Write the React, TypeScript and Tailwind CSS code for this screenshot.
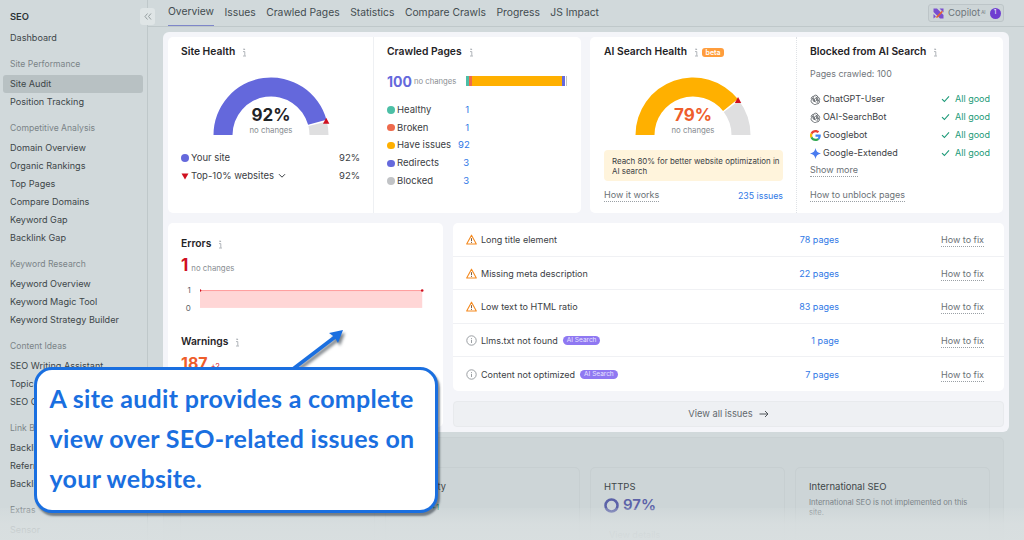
import { ReactNode } from "react";

const font = "[font-family:Inter,'Liberation_Sans',sans-serif]";

// Half-ring segment between two fractions of the gauge (0 = left, 1 = right)
function arcPath(cx: number, cy: number, R: number, r: number, from: number, to: number) {
  const pt = (rad: number, f: number) => {
    const a = Math.PI * (1 - f);
    return `${(cx + rad * Math.cos(a)).toFixed(2)} ${(cy - rad * Math.sin(a)).toFixed(2)}`;
  };
  return `M${pt(R, from)} A${R} ${R} 0 0 1 ${pt(R, to)} L${pt(r, to)} A${r} ${r} 0 0 0 ${pt(r, from)} Z`;
}

function Info() {
  return (
    <svg width="5" height="9" viewBox="0 0 5 9" className="ml-[7px] shrink-0">
      <path d="M1 1.2h2M2.6 1v1M1 3.6h1.8v4.2M1 8h3" stroke="#a9aeb3" strokeWidth="0.9" fill="none" />
    </svg>
  );
}

function Gauge({ value, color, textColor }: { value: number; color: string; textColor: string }) {
  const f = value / 100;
  const a = Math.PI * (1 - f);
  const tx = 58 + 57 * Math.cos(a);
  const ty = 58 - 57 * Math.sin(a);
  return (
    <svg width="120" height="60" viewBox="-1 0 120 60" className="block">
      <path d={arcPath(58, 58, 57.5, 38.5, 0, f - 0.005)} fill={color} />
      <path d={arcPath(58, 58, 57.5, 38.5, f + 0.005, 1)} fill="#dfdfe0" />
      <path d={`M${tx - 3.2} ${ty + 3} L${tx} ${ty - 3} L${tx + 3.2} ${ty + 3} Z`} fill="#d0101f" />
      <text x="58" y="44" textAnchor="middle" fontSize="17" fontWeight="700" fill={textColor} fontFamily="Inter">
        {value}%
      </text>
      <text x="58" y="55.5" textAnchor="middle" fontSize="7.8" fill="#878b90" fontFamily="Inter">
        no changes
      </text>
    </svg>
  );
}

function CardTitle({ children }: { children: ReactNode }) {
  return <div className="flex h-[14px] items-center text-[10.3px] font-semibold text-[#1f2326]">{children}</div>;
}

function DottedLink({ children, className = "" }: { children: ReactNode; className?: string }) {
  return (
    <span className={`border-b border-dotted border-[#9aa0a5] text-[9px] leading-[12px] text-[#6b7176] ${className}`}>
      {children}
    </span>
  );
}

function OpenAiIcon() {
  return (
    <svg width="11" height="11" viewBox="0 0 24 24" className="shrink-0" fill="none" stroke="#5c6165" strokeWidth="1.9">
      <path d="M12 2.5a5 5 0 0 1 5 4.2 5 5 0 0 1 3.2 7.8 5 5 0 0 1-5.4 7 5 5 0 0 1-8.4-1.2 5 5 0 0 1-3-8 5 5 0 0 1 4.6-7.4A5 5 0 0 1 12 2.5Z" />
      <path d="M9 4.5 6.6 8.4v6l5.4 3.2M15 19.500l2.400-4v-6L12 6.300M4 8.500 9 11.500v5M20 15.500l-5-3v-5M9 11.500l3-1.800 3 1.800v2l-3 2-3-2Z" />
    </svg>
  );
}

function GoogleIcon() {
  return (
    <svg width="11" height="11" viewBox="0 0 48 48" className="shrink-0">
      <path fill="#EA4335" d="M24 9.500c3.500 0 6.700 1.200 9.200 3.600l6.900-6.900C35.900 2.400 30.500 0 24 0 14.600 0 6.500 5.400 2.600 13.200l8 6.200C12.400 13.700 17.700 9.500 24 9.500z" />
      <path fill="#4285F4" d="M47 24.500c0-1.600-.1-3.100-.4-4.500H24v9h12.900c-.6 3-2.200 5.500-4.700 7.200l7.700 6c4.500-4.200 7.100-10.300 7.100-17.700z" />
      <path fill="#FBBC05" d="M10.500 28.600a14.500 14.500 0 0 1 0-9.200l-8-6.200a24 24 0 0 0 0 21.600l8-6.200z" />
      <path fill="#34A853" d="M24 48c6.500 0 11.900-2.100 15.900-5.800l-7.700-6c-2.200 1.500-4.900 2.300-8.200 2.300-6.300 0-11.600-4.200-13.500-9.900l-8 6.200C6.500 42.600 14.600 48 24 48z" />
    </svg>
  );
}

function GeminiIcon() {
  return (
    <svg width="11" height="11" viewBox="0 0 24 24" className="shrink-0">
      <path d="M12 0c.8 6.500 4.900 11 12 12-7.100 1-11.200 5.500-12 12-.8-6.500-4.900-11-12-12C7.100 11 11.200 6.500 12 0Z" fill="#4a7cf0" />
    </svg>
  );
}

function Check() {
  return (
    <svg width="9" height="8" viewBox="0 0 9 8" fill="none" stroke="#1c9a78" strokeWidth="1.1" className="block">
      <path d="M1 4.200 3.400 6.500 8 1.300" />
    </svg>
  );
}

function WarnIcon() {
  return (
    <svg width="11" height="11" viewBox="0 0 11 11" fill="none" className="shrink-0">
      <path d="M5.500 1.200 10.300 10H.7Z" stroke="#f58a1f" strokeWidth="1.100" strokeLinejoin="round" />
      <path d="M5.500 4.200v3M5.500 8v.9" stroke="#6b4a2a" strokeWidth="0.9" />
    </svg>
  );
}

function InfoCircle() {
  return (
    <svg width="11" height="11" viewBox="0 0 11 11" fill="none" className="shrink-0">
      <circle cx="5.500" cy="5.500" r="4.700" stroke="#8f9499" strokeWidth="0.9" />
      <path d="M5.500 3v.9M5.500 4.800v3.200" stroke="#8f9499" strokeWidth="0.9" />
    </svg>
  );
}

const nav: { heading?: string; items: string[] }[] = [
  { items: ["Dashboard"] },
  { heading: "Site Performance", items: ["Site Audit", "Position Tracking"] },
  { heading: "Competitive Analysis", items: ["Domain Overview", "Organic Rankings", "Top Pages", "Compare Domains", "Keyword Gap", "Backlink Gap"] },
  { heading: "Keyword Research", items: ["Keyword Overview", "Keyword Magic Tool", "Keyword Strategy Builder"] },
  { heading: "Content Ideas", items: ["SEO Writing Assistant", "Topic Research", "SEO Content Template"] },
  { heading: "Link Building", items: ["Backlink Analytics", "Referring Domains", "Backlink Audit"] },
  { heading: "Extras", items: ["Sensor"] },
];

function Sidebar() {
  return (
    <aside className="relative h-[540px] w-[148px] shrink-0 overflow-hidden border-r border-[#bfc8ca] pt-[8px]">
      <div className="flex h-[18px] items-center pl-[10px] text-[9.400px] font-semibold text-[#2c3336]">SEO</div>
      {nav.map((section, i) => (
        <div key={i} className={section.heading ? "mt-[8px]" : "mt-[3px]"}>
          {section.heading && (
            <div className="mb-[2px] flex h-[18px] items-center pl-[10px] text-[8.600px] text-[#7b8488]">{section.heading}</div>
          )}
          {section.items.map((item) => (
            <div
              key={item}
              className={`ml-[3px] mr-[4px] flex h-[18px] items-center rounded-[3px] pl-[7px] text-[9.100px] text-[#3d4649] ${item === "Site Audit" ? "bg-[#b8c1c3]" : ""}`}
            >
              {item}
            </div>
          ))}
        </div>
      ))}
    </aside>
  );
}

const tabs = ["Overview", "Issues", "Crawled Pages", "Statistics", "Compare Crawls", "Progress", "JS Impact"];

function TopBar() {
  return (
    <div className="flex h-[27px] items-stretch border-b border-[#bfc8ca] pl-[20px] pr-[20px]">
      <div className="flex gap-[10.500px]">
        {tabs.map((t, i) => (
          <div
            key={t}
            className={`flex h-[26px] items-center pb-[1px] text-[10.300px] text-[#434c50] ${i === 0 ? "border-b border-[#7e86c9]" : ""}`}
          >
            {t}
          </div>
        ))}
      </div>
      <div className="ml-auto mt-[4px] flex h-[18px] w-[76px] items-center gap-[4px] rounded-[3px] border border-[#bdc5c8] bg-[#cdd5d7] pl-[4px] text-[9.600px] text-[#6e767b]">
        <svg width="11" height="11" viewBox="0 0 11 11" className="shrink-0">
          <path d="M0.500 0.500H4L10.500 7V10.500H7L0.500 4Z" fill="#7a4fd0" />
          <path d="M0.500 6 3 8.500 0.500 10.500ZM6.500 0.500H10.500V4.500Z" fill="#7a4fd0" />
          <path d="M2.500 9.500 9 2.500 9.800 4 4.500 9.800Z" fill="#e8642f" />
        </svg>
        <span className="leading-[12px]">
          Copilot<sup className="ml-px text-[4.500px]">AI</sup>
        </span>
        <span className="flex size-[11px] items-center justify-center rounded-full bg-[#6f3fd0] text-[6.500px] text-white">1</span>
      </div>
    </div>
  );
}

const pagesRows = [
  { label: "Healthy", value: "1", color: "bg-[#4cbfa6]" },
  { label: "Broken", value: "1", color: "bg-[#ee6a4d]" },
  { label: "Have issues", value: "92", color: "bg-[#ffb000]" },
  { label: "Redirects", value: "3", color: "bg-[#6569dc]" },
  { label: "Blocked", value: "3", color: "bg-[#c1c3c6]" },
];

function HealthCard() {
  return (
    <div className="flex h-[176px] rounded-[5px] bg-white">
      <div className="w-[206px] shrink-0 border-r border-[#eef0f3] px-[13px] pt-[8px]">
        <CardTitle>
          Site Health
          <Info />
        </CardTitle>
        <div className="mt-[18px] flex justify-center pl-[2px]">
          <Gauge value={92} color="#6468dc" textColor="#1f2326" />
        </div>
        <div className="mt-[12px] flex h-[18px] items-center text-[9.500px] text-[#3b4044]">
          <span className="mr-[2.500px] size-[7.500px] rounded-full bg-[#6569dc]" />
          Your site
          <span className="ml-auto">92%</span>
        </div>
        <div className="flex h-[18px] items-center text-[9.500px] text-[#3b4044]">
          <svg width="8" height="7" viewBox="0 0 8 7" className="mr-[2px]">
            <path d="M0.500 0.500h7L4 6.500Z" fill="#d0101f" />
          </svg>
          Top-10% websites
          <svg width="8" height="6" viewBox="0 0 8 6" fill="none" stroke="#3b4044" strokeWidth="1" className="ml-[4px]">
            <path d="M1 1.200 4 4.200 7 1.200" />
          </svg>
          <span className="ml-auto">92%</span>
        </div>
      </div>
      <div className="flex-1 pl-[13px] pr-[14px] pt-[8px]">
        <CardTitle>
          Crawled Pages
          <Info />
        </CardTitle>
        <div className="mt-[10px] flex h-[24px] items-center">
          <span className="text-[14px] font-bold text-[#6569dc]">100</span>
          <span className="ml-[2px] pt-[2px] text-[7.700px] text-[#8a8e93]">no changes</span>
          <div className="ml-auto flex h-[10px] w-[101px]">
            <span className="w-[2.500px] bg-[#4cbfa6]" />
            <span className="w-[3.500px] bg-[#ee6a4d]" />
            <span className="flex-1 bg-[#ffb000]" />
            <span className="w-[2.500px] bg-[#6569dc]" />
            <span className="w-[1px] bg-white" />
            <span className="w-[1.500px] bg-[#c1c3c6]" />
          </div>
        </div>
        <div className="mt-[8px]">
          {pagesRows.map((r) => (
            <div key={r.label} className="flex h-[17.800px] items-center text-[9.500px] text-[#3b4044]">
              <span className={`mr-[2.500px] size-[7.500px] rounded-full ${r.color}`} />
              <span className="w-[61px]">{r.label}</span>
              <span className="w-[11px] text-right text-[#2f78e6]">{r.value}</span>
            </div>
          ))}
        </div>
      </div>
    </div>
  );
}

const bots = [
  { name: "ChatGPT-User", icon: <OpenAiIcon /> },
  { name: "OAI-SearchBot", icon: <OpenAiIcon /> },
  { name: "Googlebot", icon: <GoogleIcon /> },
  { name: "Google-Extended", icon: <GeminiIcon /> },
];

function AiCard() {
  return (
    <div className="flex h-[176px] rounded-[5px] bg-white">
      <div className="flex w-[207px] shrink-0 flex-col border-r border-dotted border-[#dfe2e6] pl-[14px] pr-[13px] pt-[8px]">
        <CardTitle>
          AI Search Health
          <Info />
          <span className="ml-[3px] rounded-[3px] bg-[#ff9d3c] px-[3.500px] text-[7px] leading-[9px] text-white">beta</span>
        </CardTitle>
        <div className="mt-[18px] flex justify-center">
          <Gauge value={79} color="#ffb000" textColor="#ee5d2b" />
        </div>
        <div className="mt-[13px] rounded-[4px] bg-[#fff4dc] px-[8px] py-[5.500px] text-[7.900px] leading-[10px] whitespace-nowrap text-[#3b4044]">
          Reach 80% for better website optimization in
          <br />
          AI search
        </div>
        <div className="mt-[8px] flex items-center justify-between">
          <DottedLink>How it works</DottedLink>
          <span className="text-[8.800px] text-[#2f78e6]">235 issues</span>
        </div>
      </div>
      <div className="flex-1 pl-[13px] pr-[13px] pt-[8px]">
        <CardTitle>
          Blocked from AI Search
          <Info />
        </CardTitle>
        <div className="mt-[8px] text-[8.900px] leading-[14px] text-[#71767b]">Pages crawled: 100</div>
        <div className="mt-[9px]">
          {bots.map((b) => (
            <div key={b.name} className="flex h-[18px] items-center text-[9px] text-[#3b4044]">
              {b.icon}
              <span className="ml-[2px]">{b.name}</span>
              <span className="ml-auto mr-[5px]">
                <Check />
              </span>
              <span className="text-[#1c9a78]">All good</span>
            </div>
          ))}
        </div>
        <div className="mt-[2px] flex">
          <DottedLink>Show more</DottedLink>
        </div>
        <div className="mt-[12px] flex">
          <DottedLink>How to unblock pages</DottedLink>
        </div>
      </div>
    </div>
  );
}

function ErrorsCard() {
  return (
    <div className="h-[204px] w-[275px] shrink-0 rounded-[5px] bg-white px-[13px] pt-[14px]">
      <CardTitle>
        Errors
        <Info />
      </CardTitle>
      <div className="mt-[2px] flex h-[17px] items-baseline">
        <span className="text-[17px] font-bold text-[#d0101f]">1</span>
        <span className="ml-[3px] text-[7.800px] text-[#8a8e93]">no changes</span>
      </div>
      <div className="mt-[13.500px] flex">
        <div className="flex w-[19px] flex-col gap-[7.500px] pt-[1.500px] text-right text-[8px] leading-[10px] text-[#5d6267]">
          <span className="pr-[9px]">1</span>
          <span className="pr-[9px]">0</span>
        </div>
        <svg width="232" height="24" viewBox="0 0 232 24" className="block">
          <rect x="0" y="6" width="224" height="18" fill="#ffd6d6" />
          <path d="M0 6.500H224" stroke="#ff8f8f" strokeWidth="0.800" />
          <circle cx="0" cy="6.500" r="1.300" fill="#d0101f" />
          <circle cx="224" cy="6.500" r="1.300" fill="#d0101f" />
        </svg>
      </div>
      <div className="mt-[22.500px]">
        <CardTitle>
          Warnings
          <Info />
        </CardTitle>
      </div>
      <div className="mt-[2px] flex items-baseline">
        <span className="text-[16px] font-bold text-[#ee5d2b]">187</span>
        <span className="ml-[3px] text-[7.500px] text-[#d0101f]">+2</span>
      </div>
    </div>
  );
}

const issues = [
  { text: "Long title element", pages: "78 pages", warn: true },
  { text: "Missing meta description", pages: "22 pages", warn: true },
  { text: "Low text to HTML ratio", pages: "83 pages", warn: true },
  { text: "Llms.txt not found", pages: "1 page", ai: true },
  { text: "Content not optimized", pages: "7 pages", ai: true },
];

function IssuesList() {
  return (
    <div className="flex flex-1 flex-col gap-[10px]">
      <div className="h-[168px] divide-y divide-[#f0f1f4] rounded-[5px] bg-white">
        {issues.map((row) => (
          <div key={row.text} className="flex h-[33.600px] items-center pl-[13px] pr-[20px] pt-[1px] text-[9px] text-[#3b4044]">
            {row.warn ? <WarnIcon /> : <InfoCircle />}
            <span className="ml-[4px]">{row.text}</span>
            {row.ai && (
              <span className="ml-[5px] rounded-full bg-[#8f78f2] px-[4px] text-[6.500px] leading-[9px] text-[#e8e4ff]">AI Search</span>
            )}
            <span className="ml-auto mr-[102px] text-[#2f78e6]">{row.pages}</span>
            <DottedLink className="mt-[2px]">How to fix</DottedLink>
          </div>
        ))}
      </div>
      <div className="flex h-[26px] items-center justify-center gap-[6px] rounded-[4px] border border-[#e8eaed] bg-[#eef0f3] text-[9.300px] text-[#62686d]">
        View all issues
        <svg width="10" height="8" viewBox="0 0 10 8" fill="none" stroke="#4f5559" strokeWidth="1">
          <path d="M0.500 4H9M6 1l3 3-3 3" />
        </svg>
      </div>
    </div>
  );
}

function LowerCard({ children, className = "" }: { children?: ReactNode; className?: string }) {
  return <div className={`flex h-[80px] w-[195px] flex-col rounded-[5px] border border-[#c7cfd1] pt-[13px] ${className}`}>{children}</div>;
}

function LowerPanel() {
  return (
    <div className="mr-[20px] mt-[5px] h-[110px] rounded-[5px] border border-[#c9d1d3] bg-[#cdd5d7] pl-[16px] pt-[29px]">
      <div className="flex gap-[10px]">
        <LowerCard className="px-[13px]" />
        <LowerCard className="pl-[9px]">
          <div className="text-[9.200px] leading-[12px] text-[#3d4649]">Crawlability</div>
          <div className="mt-[1px] flex items-baseline">
            <span className="text-[15px] font-semibold text-[#5b62a8]">97%</span>
            <span className="ml-[3px] text-[7.500px] text-[#1c9a78]">+1</span>
          </div>
        </LowerCard>
        <LowerCard className="px-[13px]">
          <div className="text-[9.500px] leading-[12px] text-[#3d4649]">HTTPS</div>
          <div className="mt-[1px] flex items-center gap-[4px]">
            <svg width="15" height="15" viewBox="0 0 15 15" fill="none">
              <circle cx="7.500" cy="7.500" r="6" stroke="#5b62a8" strokeWidth="2.500" />
            </svg>
            <span className="text-[15px] font-semibold text-[#5b62a8]">97%</span>
          </div>
          <div className="ml-[5px] mt-[12px] text-[9px] leading-[12px] text-[#8d979a]">View details</div>
        </LowerCard>
        <LowerCard className="px-[13px]">
          <div className="text-[9.500px] leading-[12px] text-[#3d4649]">International SEO</div>
          <div className="mt-[5px] text-[7.600px] leading-[10px] text-[#7b8488]">
            International SEO is not implemented on this site.
          </div>
        </LowerCard>
      </div>
    </div>
  );
}

function Callout() {
  return (
    <>
      <svg
        width="70"
        height="50"
        viewBox="0 0 70 50"
        className="absolute left-[285px] top-[326px] [filter:drop-shadow(2px_3px_1.5px_rgba(40,50,60,0.6))]"
      >
        <path d="M8 43 50 11" stroke="#1a6fe0" strokeWidth="3.600" />
        <path d="M58 4 44 7 49.500 11 53 17Z" fill="#1a6fe0" />
      </svg>
      <div className="absolute left-[34px] top-[367px] flex h-[146px] w-[404px] flex-col justify-center rounded-[18px] border-[3.500px] border-[#1a6fe0] bg-white pb-[4px] pl-[12.500px] font-bold text-[#1a6fe0] shadow-[2px_3px_2px_rgba(40,50,60,0.55)] [font-family:Lato,'Liberation_Sans',sans-serif]">
        <div className="text-[25px] leading-[40px] tracking-[0.3px]">
          A site audit provides a complete
          <br />
          view over SEO-related issues on
          <br />
          your website.
        </div>
      </div>
    </>
  );
}

export default function App() {
  return (
    <div className={`relative flex h-[540px] w-[1024px] overflow-hidden bg-[#d1d9db] ${font}`}>
      <Sidebar />
      {/* collapse button sits across the sidebar edge */}
      <div className="absolute left-[140px] top-[8px] flex h-[17px] w-[15px] items-center justify-center rounded-[3px] bg-[#dfe5e6]">
        <svg width="8" height="7" viewBox="0 0 8 7" fill="none" stroke="#8d9598" strokeWidth="0.900">
          <path d="M3.500.5 1 3.500l2.500 3M7 .5 4.500 3.500 7 6.500" />
        </svg>
      </div>
      <main className="min-w-0 flex-1">
        <TopBar />
        <div className="ml-[15px]">
          <div className="mt-[5px] flex h-[400px] w-[846px] flex-col gap-[10px] rounded-[6px] bg-[#f4f5f9] p-[5px]">
            <div className="grid grid-cols-[413px_413px] gap-[9px]">
              <HealthCard />
              <AiCard />
            </div>
            <div className="flex gap-[10px]">
              <ErrorsCard />
              <IssuesList />
            </div>
          </div>
          <LowerPanel />
        </div>
      </main>
      {/* faded bottom strip of the page */}
      <div className="absolute inset-x-0 bottom-0 h-[32px] bg-gradient-to-b from-[#d9dfe0]/20 via-[#d9dfe0]/85 to-[#d9dfe0]/95" />
      <Callout />
    </div>
  );
}
